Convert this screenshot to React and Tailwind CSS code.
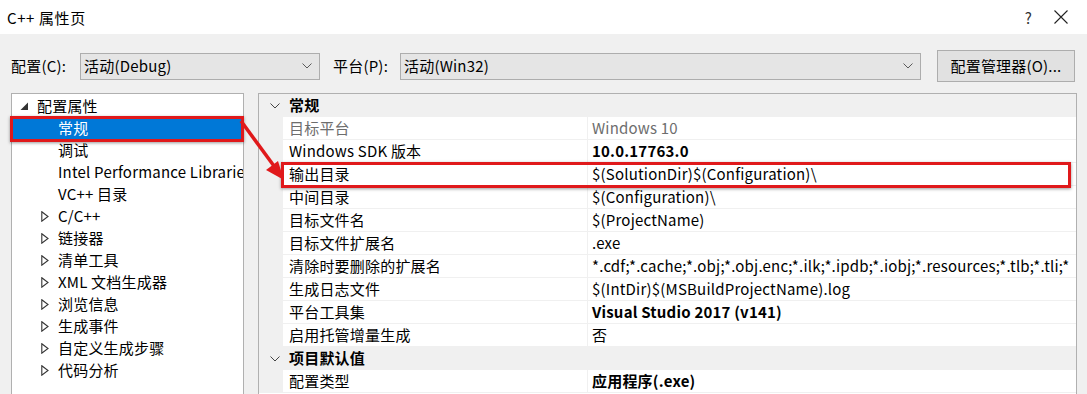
import React from "react";

const treeItems = [
  { label: "常规", selected: true },
  { label: "调试" },
  { label: "Intel Performance Libraries" },
  { label: "VC++ 目录" },
  { label: "C/C++", expandable: true },
  { label: "链接器", expandable: true },
  { label: "清单工具", expandable: true },
  { label: "XML 文档生成器", expandable: true },
  { label: "浏览信息", expandable: true },
  { label: "生成事件", expandable: true },
  { label: "自定义生成步骤", expandable: true },
  { label: "代码分析", expandable: true },
];

const rows = [
  { header: "常规" },
  { name: "目标平台", value: "Windows 10", muted: true },
  { name: "Windows SDK 版本", value: "10.0.17763.0", bold: true },
  { name: "输出目录", value: "$(SolutionDir)$(Configuration)\\" },
  { name: "中间目录", value: "$(Configuration)\\" },
  { name: "目标文件名", value: "$(ProjectName)" },
  { name: "目标文件扩展名", value: ".exe" },
  {
    name: "清除时要删除的扩展名",
    value: "*.cdf;*.cache;*.obj;*.obj.enc;*.ilk;*.ipdb;*.iobj;*.resources;*.tlb;*.tli;*",
  },
  { name: "生成日志文件", value: "$(IntDir)$(MSBuildProjectName).log" },
  { name: "平台工具集", value: "Visual Studio 2017 (v141)", bold: true },
  { name: "启用托管增量生成", value: "否" },
  { header: "项目默认值" },
  { name: "配置类型", value: "应用程序(.exe)", bold: true },
];

const Chevron = ({ className }) => (
  <svg width="10" height="6" viewBox="0 0 10 6" className={className}>
    <path d="M0.5 0.5 L5 5 L9.5 0.5" fill="none" stroke="currentColor" strokeWidth="1" />
  </svg>
);

const Combo = ({ text, className }) => (
  <div
    className={
      "h-[27px] flex items-center justify-between bg-[#e5e5e5] border border-[#adadad] pl-[3px] pr-[7px] " +
      className
    }
  >
    <span>{text}</span>
    <Chevron className="text-[#5a5a5a]" />
  </div>
);

const App = () => {
  return (
    <div
      className="relative w-[1087px] h-[394px] overflow-hidden bg-[#f0f0f0] text-[15px] text-black tracking-[0.2px]"
      style={{ fontFamily: '"Noto Sans CJK SC", "Noto Sans", sans-serif' }}
    >
      {/* title bar */}
      <div className="h-[34px] bg-white flex items-center justify-between pl-[7px] pr-[19px]">
        <span className="leading-none tracking-[0.6px]">C++ 属性页</span>
        <div className="flex items-center gap-[22px]">
          <span className="text-[15px] text-[#333] leading-none">?</span>
          <svg width="14" height="14" viewBox="0 0 14 14">
            <path d="M0.5 0.5 L13.5 13.5 M13.5 0.5 L0.5 13.5" stroke="#222" strokeWidth="1.1" />
          </svg>
        </div>
      </div>

      {/* config row */}
      <div className="flex items-center h-[32px] mt-[16px] pl-[11px]">
        <span className="w-[69px]">配置(C):</span>
        <Combo text="活动(Debug)" className="w-[240px]" />
        <span className="ml-[13px] w-[67px]">平台(P):</span>
        <Combo text="活动(Win32)" className="w-[521px]" />
        <button className="ml-[16px] w-[138px] h-[32px] bg-[#e1e1e1] border border-[#adadad]">
          配置管理器(O)...
        </button>
      </div>

      {/* panels */}
      <div className="flex mt-[11px] pl-[11px] h-[320px]">
        <div className="w-[233px] bg-white border border-[#b0b0b0] pt-[1px] overflow-hidden">
          <div className="h-[22px] flex items-center pl-[8px] whitespace-nowrap">
            <svg width="9" height="9" viewBox="0 0 9 9" className="mr-[8px]">
              <polygon points="8,0.5 8,8 0.5,8" fill="#333" />
            </svg>
            配置属性
          </div>
          {treeItems.map((item) => (
            <div
              key={item.label}
              className={
                "h-[22px] flex items-center whitespace-nowrap pl-[28px] mx-[1px] " +
                (item.selected ? "bg-[#0078d7] text-white" : "")
              }
            >
              <span className="w-[16px] shrink-0 flex items-center">
                {item.expandable && (
                  <svg width="8" height="11" viewBox="0 0 8 11">
                    <polygon points="0.8,0.8 7,5.5 0.8,10.2" fill="none" stroke="#333" strokeWidth="1.1" />
                  </svg>
                )}
              </span>
              <span className="pl-[1px]">{item.label}</span>
            </div>
          ))}
        </div>

        <div className="ml-[14px] w-[819px] bg-white border border-[#b0b0b0] overflow-hidden">
          {rows.map((row) =>
            row.header ? (
              <div key={row.header} className="h-[23px] flex items-center bg-[#f0f0f0]">
                <span className="w-[30px] flex justify-center pl-[2px]">
                  <Chevron className="text-[#444]" />
                </span>
                <span className="font-bold">{row.header}</span>
              </div>
            ) : (
              <div key={row.name} className="h-[23px] flex">
                <div className="w-[24px] bg-[#f0f0f0]" />
                <div
                  className={
                    "w-[305px] pl-[6px] flex items-center border-b border-r border-[#f0f0f0] whitespace-nowrap " +
                    (row.muted ? "text-[#6d6d6d]" : "")
                  }
                >
                  {row.name}
                </div>
                <div
                  className={
                    "flex-1 min-w-0 pl-[4px] flex items-center border-b border-[#f0f0f0] whitespace-nowrap overflow-hidden " +
                    (row.bold ? "font-bold " : "") +
                    (row.muted ? "text-[#6d6d6d]" : "")
                  }
                >
                  {row.value}
                </div>
              </div>
            )
          )}
        </div>
      </div>

      {/* annotations */}
      <div className="absolute left-[10px] top-[116px] w-[234px] h-[26px] border-[3px] border-[#e0191b] shadow-[0_1px_3px_rgba(0,0,0,0.4)]" />
      <div className="absolute left-[281px] top-[162px] w-[790px] h-[26px] border-[3px] border-[#e0191b] shadow-[0_1px_3px_rgba(0,0,0,0.4)]" />
      <svg className="absolute left-0 top-0" width="1087" height="394">
        <line x1="241" y1="121" x2="274" y2="166" stroke="#e0191b" strokeWidth="3.5" />
        <polygon points="284,180 266,170 278,161" fill="#e0191b" />
      </svg>
    </div>
  );
};

export default App;
